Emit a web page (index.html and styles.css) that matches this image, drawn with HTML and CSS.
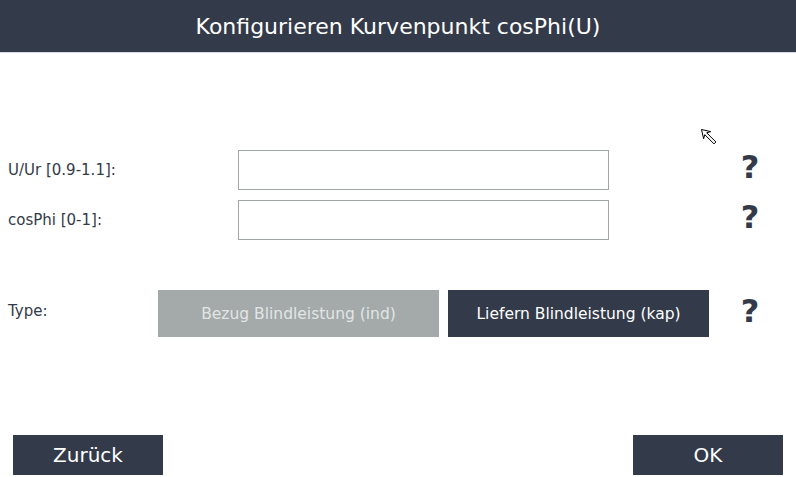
FILE: index.html
```html
<!DOCTYPE html>
<html lang="de">
<head>
<meta charset="utf-8">
<title>Konfigurieren Kurvenpunkt cosPhi(U)</title>
<link rel="stylesheet" href="styles.css">
</head>
<body>
<div class="screen">
  <header class="header">Konfigurieren Kurvenpunkt cosPhi(U)</header>
  <main class="form">
    <div class="row">
      <label class="label">U/Ur [0.9-1.1]:</label>
      <input class="field" type="text">
      <span class="help">?</span>
    </div>
    <div class="row">
      <label class="label">cosPhi [0-1]:</label>
      <input class="field" type="text">
      <span class="help">?</span>
    </div>
    <div class="row type-row">
      <label class="label type-label">Type:</label>
      <button class="btn btn-off btn-ind">Bezug Blindleistung (ind)</button>
      <button class="btn btn-on btn-kap">Liefern Blindleistung (kap)</button>
      <span class="help help-type">?</span>
    </div>
  </main>
  <footer class="footer">
    <button class="btn btn-on nav">Zurück</button>
    <button class="btn btn-on nav">OK</button>
  </footer>
  <svg class="cursor" width="19" height="19" viewBox="0 0 19 19">
    <path d="M1.5 1.5 L10.7 3.6 L6.7 4.8 L15.9 14 L14 15.9 L4.8 6.7 L3.6 10.7 Z" fill="#fff" stroke="#000" stroke-width="1" stroke-linejoin="miter"/>
  </svg>
</div>
</body>
</html>
```
FILE: styles.css
```css
html, body {
  margin: 0;
  padding: 0;
  background: #fff;
}
.screen {
  position: relative;
  width: 796px;
  height: 477px;
  display: flex;
  flex-direction: column;
  font-family: "DejaVu Sans", "Liberation Sans", sans-serif;
  color: #333a4a;
  overflow: hidden;
}
.header {
  height: 52px;
  background: #333a4a;
  border-bottom: 1px solid #d6d7ec;
  color: #fff;
  font-family: "DejaVu Sans", "Liberation Sans", sans-serif;
  font-size: 22px;
  display: flex;
  align-items: center;
  justify-content: center;
}
.form {
  flex: 1;
  padding: 97px 0 0 8px;
  display: flex;
  flex-direction: column;
  gap: 10px;
}
.row {
  display: flex;
  align-items: center;
  height: 40px;
}
.label {
  width: 230px;
  font-size: 15px;
  color: #333a4a;
}
.field {
  width: 371px;
  height: 40px;
  box-sizing: border-box;
  border: 1px solid #a0a5a5;
  margin: 0;
  padding: 0 6px;
  background: #fff;
  outline: none;
}
.help {
  width: 30px;
  text-align: center;
  margin-left: 126px;
  font-size: 32px;
  font-weight: bold;
  color: #333a4a;
  line-height: 1;
  position: relative;
  top: -3px;
}
.type-row {
  margin-top: 40px;
  height: 47px;
}
.type-label {
  width: 150px;
  position: relative;
  top: -3px;
}
.btn {
  border: none;
  margin: 0;
  padding: 0;
  font-family: "DejaVu Sans", "Liberation Sans", sans-serif;
  cursor: default;
}
.btn-off {
  background: #a3aaa9;
  color: #e2e5e5;
}
.btn-on {
  background: #333a4a;
  color: #fff;
}
.btn-ind, .btn-kap {
  height: 47px;
  font-size: 15.5px;
}
.btn-ind {
  width: 281px;
}
.btn-kap {
  width: 261px;
  margin-left: 9px;
}
.help-type {
  margin-left: 26px;
}
.footer {
  display: flex;
  justify-content: space-between;
  padding: 0 13px 2px 13px;
}
.nav {
  width: 150px;
  height: 40px;
  font-size: 20px;
}
.cursor {
  position: absolute;
  left: 700px;
  top: 128px;
}
```
